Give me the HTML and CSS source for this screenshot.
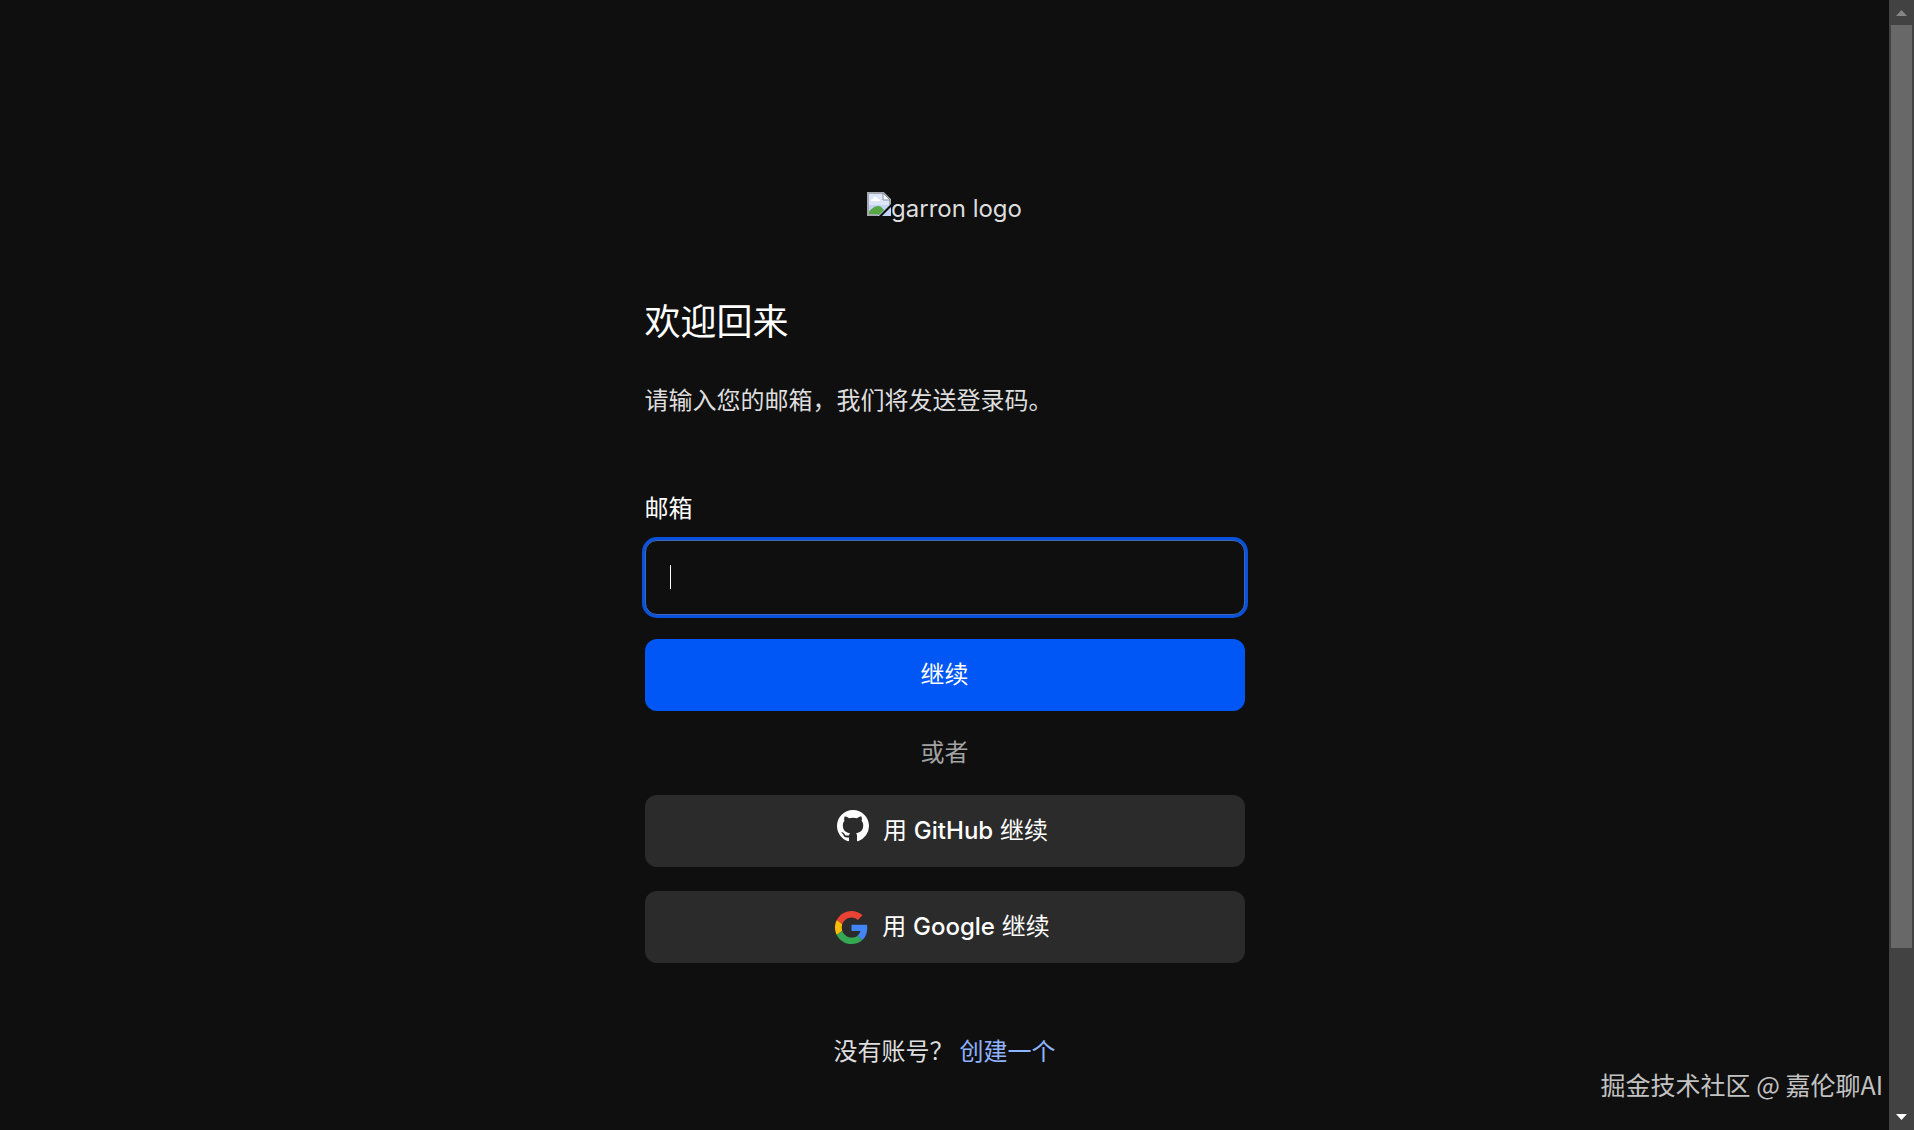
FILE: index.html
```html
<!DOCTYPE html>
<html lang="zh-CN">
<head>
    <meta charset="UTF-8">
    <meta name="viewport" content="width=device-width, initial-scale=1.0">
    <title>欢迎回来</title>
    <link rel="stylesheet" href="styles.css">
</head>
<body>
    <main class="page">
        <div class="login">
            <div class="logo">
                <svg class="logo-icon" viewBox="0 0 24 24" aria-hidden="true">
                    <path fill="#c3d3f6" d="M0 0h17l7 7v17H0z"/>
                    <path fill="#dce6fb" d="M2 2h14v6h6v5H2z"/>
                    <path fill="#fff" d="M4 9c0-2 1-2 2-2 0-3 4-3 5 0 2 0 2 1 2 2z"/>
                    <path fill="#58a946" d="M1 23v-3c4-3 6-6 10-6 3 0 4 2 6 4l-5 5z"/>
                    <path fill="none" stroke="#a5a8ad" stroke-width="2" d="M11 23H1V1h15l7 7v5"/>
                    <path fill="#f4f6fa" stroke="#8d9096" d="M16 1v7h7z"/>
                    <path fill="#0f0f0f" d="M12 24 24 12v3l-9 9z"/>
                    <path fill="#0f0f0f" d="M17 0h7v7z"/>
                </svg>
                <span>garron logo</span>
            </div>

            <h1>欢迎回来</h1>
            <p class="intro">请输入您的邮箱，我们将发送登录码。</p>

            <form class="form">
                <label for="email">邮箱</label>
                <div class="field">
                    <input type="email" id="email" name="email">
                    <span class="caret"></span>
                </div>
                <button type="submit" class="btn primary">继续</button>
                <p class="or">或者</p>
                <button type="button" class="btn social github">
                    <svg viewBox="0 0 16 16" aria-hidden="true">
                        <path fill="#fff" d="M8 0C3.58 0 0 3.58 0 8c0 3.540 2.290 6.530 5.470 7.590.4.070.550-.170.550-.380 0-.190-.010-.820-.010-1.490-2.010.370-2.530-.490-2.690-.940-.090-.230-.480-.940-.820-1.130-.280-.150-.680-.520-.010-.530.630-.010 1.080.580 1.230.820.720 1.210 1.870.870 2.330.660.070-.520.280-.870.510-1.070-1.780-.2-3.640-.890-3.640-3.950 0-.870.310-1.590.820-2.150-.080-.2-.360-1.020.080-2.120 0 0 .670-.210 2.200.820.640-.180 1.320-.270 2-.270s1.360.090 2 .270c1.530-1.040 2.200-.820 2.200-.820.440 1.100.160 1.920.080 2.120.510.560.820 1.270.820 2.150 0 3.070-1.870 3.750-3.650 3.950.290.250.540.730.540 1.480 0 1.070-.010 1.930-.010 2.200 0 .210.150.460.550.380A8.010 8.010 0 0 0 16 8c0-4.420-3.580-8-8-8z"/>
                    </svg>
                    <span>用 <span class="name">GitHub</span> 继续</span>
                </button>
                <button type="button" class="btn social">
                    <svg viewBox="0 0 48 48" aria-hidden="true">
                        <path fill="#ea4335" d="M24 9.500c3.540 0 6.710 1.220 9.210 3.600l6.850-6.850C35.900 2.380 30.470 0 24 0 14.620 0 6.510 5.380 2.560 13.220l7.980 6.190C12.430 13.720 17.740 9.500 24 9.500z"/>
                        <path fill="#4285f4" d="M46.980 24.550c0-1.570-.15-3.090-.38-4.550H24v9.020h12.940c-.58 2.960-2.260 5.480-4.780 7.180l7.730 6c4.510-4.180 7.090-10.360 7.090-17.650z"/>
                        <path fill="#fbbc05" d="M10.530 28.590c-.48-1.450-.76-2.990-.76-4.590s.27-3.140.76-4.590l-7.980-6.190C.92 16.460 0 20.120 0 24c0 3.880.92 7.540 2.560 10.780z"/>
                        <path fill="#34a853" d="M24 48c6.480 0 11.930-2.130 15.890-5.810l-7.730-6c-2.150 1.450-4.920 2.300-8.160 2.300-6.260 0-11.570-4.220-13.470-9.910l-7.980 6.190C6.510 42.620 14.620 48 24 48z"/>
                    </svg>
                    <span>用 <span class="name">Google</span> 继续</span>
                </button>
            </form>

            <p class="signup">没有账号？<a href="#">创建一个</a></p>
        </div>
        <div class="watermark">掘金技术社区 @ 嘉伦聊AI</div>
    </main>

    <!-- Scrollbar -->
    <div class="scrollbar" aria-hidden="true">
        <svg class="arrow up" viewBox="0 0 11 6"><path d="M0 6 5.500 0 11 6z"/></svg>
        <div class="track"><div class="thumb"></div></div>
        <svg class="arrow" viewBox="0 0 11 6"><path d="M0 0h11L5.500 6z"/></svg>
    </div>
</body>
</html>
```
FILE: styles.css
```css
* {
    box-sizing: border-box;
}

body {
    margin: 0;
    height: 100vh;
    display: flex;
    overflow: hidden;
    background-color: #0f0f0f;
    color: #dedede;
    font-family: Inter, "Noto Sans CJK SC", sans-serif;
    font-size: 24px;
    line-height: 36px;
}

h1, p {
    margin: 0;
}

.page {
    flex: 1;
    position: relative;
    padding: 192px 24px 60px;
}

.login {
    max-width: 600px;
    margin: 0 auto;
}

.logo {
    display: flex;
    justify-content: center;
    margin-bottom: 72px;
}

.logo-icon {
    width: 24px;
    height: 24px;
}

.logo span {
    line-height: 34px;
}

h1 {
    margin-bottom: 37px;
    color: #fff;
    font-size: 36px;
    font-weight: 400;
    line-height: 48px;
}

.intro {
    margin-bottom: 72px;
}

.form {
    display: flex;
    flex-direction: column;
}

label {
    margin-bottom: 13px;
    color: #fff;
}

.field {
    position: relative;
    margin-bottom: 24px;
}

.field input {
    display: block;
    width: 100%;
    height: 75px;
    padding: 0 24px;
    border: 1px solid #3a69b8;
    border-radius: 12px;
    outline: none;
    background-color: #0f0f0f;
    box-shadow: 0 0 0 3px #0a52dc;
    color: #fff;
    font: inherit;
}

.caret {
    position: absolute;
    top: 25px;
    left: 25px;
    width: 1px;
    height: 24px;
    background-color: #fff;
}

.btn {
    display: flex;
    justify-content: center;
    align-items: center;
    height: 72px;
    padding: 0 24px;
    border: none;
    border-radius: 12px;
    color: #fff;
    font: inherit;
    cursor: pointer;
}

.primary {
    background-color: #0057f5;
}

.social {
    gap: 14px;
    padding-right: 28px;
    background-color: #2b2b2b;
}

.social svg {
    width: 33px;
    height: 33px;
}

.social .name {
    font-weight: 500;
}

.github {
    margin-bottom: 24px;
}

.github svg {
    width: 32px;
    height: 32px;
    margin-bottom: 10px;
}

.or {
    margin: 24px 0;
    color: #a3a3a3;
    text-align: center;
}

.signup {
    margin-top: 71px;
    text-align: center;
}

.signup a {
    margin-left: 6px;
    color: #8fb4ff;
    text-decoration: none;
}

.watermark {
    position: absolute;
    right: 6px;
    bottom: 28px;
    color: #c2c2c2;
    font-family: "Noto Sans CJK SC", sans-serif;
    font-size: 25px;
}

.scrollbar {
    display: flex;
    flex-direction: column;
    align-items: center;
    width: 25px;
    padding: 10px 0;
    background-color: #424242;
}

.arrow {
    width: 11px;
    height: 6px;
    fill: #fff;
}

.arrow.up {
    fill: #868686;
}

.track {
    flex: 1;
    width: 21px;
    margin: 9px 0;
}

.thumb {
    height: 85.5%;
    background-color: #686868;
}
```
